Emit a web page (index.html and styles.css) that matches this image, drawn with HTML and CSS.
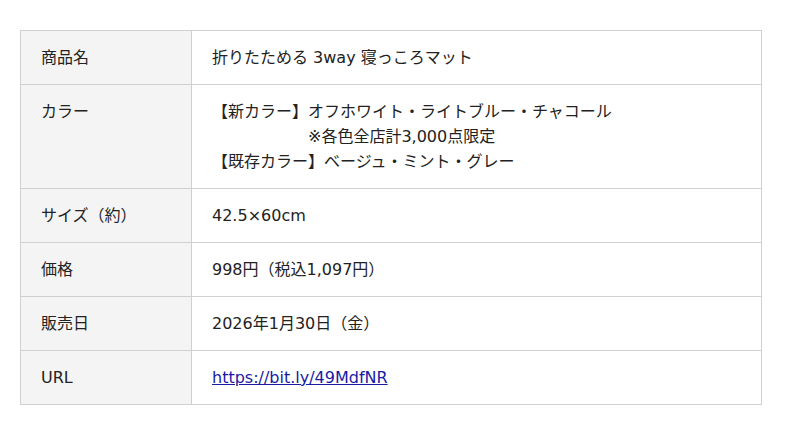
FILE: index.html
```html
<!DOCTYPE html>
<html lang="ja">
<head>
<meta charset="utf-8">
<link rel="stylesheet" href="styles.css">
</head>
<body>
<table class="spec">
  <tr><th>商品名</th><td>折りたためる 3way 寝っころマット</td></tr>
  <tr><th>カラー</th><td>【新カラー】オフホワイト・ライトブルー・チャコール<br><span class="note">※各色全店計3,000点限定</span><br>【既存カラー】ベージュ・ミント・グレー</td></tr>
  <tr><th>サイズ（約）</th><td>42.5×60cm</td></tr>
  <tr><th>価格</th><td>998円（税込1,097円）</td></tr>
  <tr><th>販売日</th><td>2026年1月30日（金）</td></tr>
  <tr><th>URL</th><td><a href="#" class="link">https://bit.ly/49MdfNR</a></td></tr>
</table>
</body>
</html>
```
FILE: styles.css
```css
html, body {
  margin: 0;
  padding: 0;
  background: #fff;
}
body {
  padding: 30px 38px 0 20px;
  font-family: "DejaVu Sans", "Noto Sans CJK JP", sans-serif;
  font-size: 16px;
  color: #222;
}
.spec {
  width: 742px;
  border-collapse: collapse;
  line-height: 25px;
}
.spec th, .spec td {
  border: 1px solid #d0d0d0;
  padding: 14px 20px;
  text-align: left;
  vertical-align: top;
  font-weight: normal;
}
.spec th {
  width: 130px;
  background: #f4f4f4;
}
.note {
  padding-left: 96px;
}
.link {
  color: #1a1aa6;
  text-decoration: underline;
}
```
